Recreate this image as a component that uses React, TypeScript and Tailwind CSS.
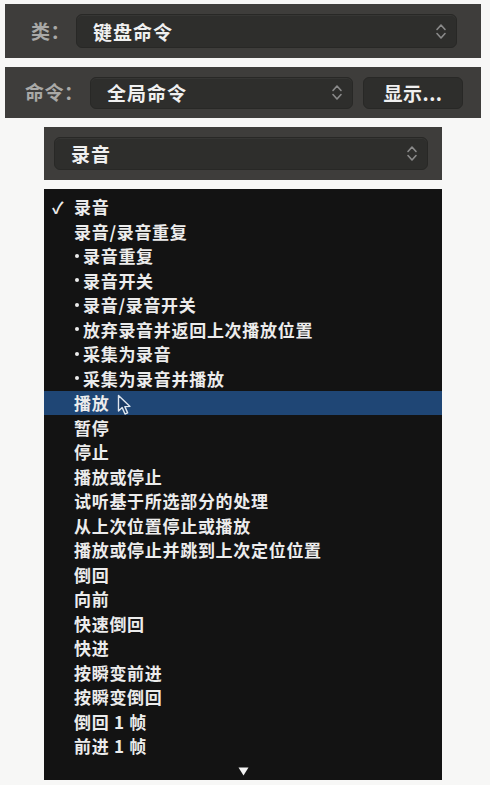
const CJK = "font-['Noto_Sans_CJK_SC','Liberation_Sans',sans-serif]";

/* ── Data ─────────────────────────────────────────────────── */

type Item = { label: string; bullet?: boolean; checked?: boolean; active?: boolean };

const ITEMS: Item[] = [
    { label: "录音", checked: true },
    { label: "录音/录音重复" },
    { label: "录音重复", bullet: true },
    { label: "录音开关", bullet: true },
    { label: "录音/录音开关", bullet: true },
    { label: "放弃录音并返回上次播放位置", bullet: true },
    { label: "采集为录音", bullet: true },
    { label: "采集为录音并播放", bullet: true },
    { label: "播放", active: true },
    { label: "暂停" },
    { label: "停止" },
    { label: "播放或停止" },
    { label: "试听基于所选部分的处理" },
    { label: "从上次位置停止或播放" },
    { label: "播放或停止并跳到上次定位位置" },
    { label: "倒回" },
    { label: "向前" },
    { label: "快速倒回" },
    { label: "快进" },
    { label: "按瞬变前进" },
    { label: "按瞬变倒回" },
    { label: "倒回 1 帧" },
    { label: "前进 1 帧" },
];

/* ── Bits ─────────────────────────────────────────────────── */

function Chevrons() {
    return (
        <svg width="12" height="17" viewBox="0 0 12 17" fill="none" stroke="#8a8a8a" strokeWidth="1.6" strokeLinecap="round" strokeLinejoin="round">
            <path d="M2 6.5 L6 2 L10 6.5" />
            <path d="M2 10.5 L6 15 L10 10.5" />
        </svg>
    );
}

function Select({ text, className }: { text: string; className: string }) {
    return (
        <div className={`flex items-center justify-between rounded-[6px] bg-[#2e2e2c] border border-[#282826] shadow-[inset_0_1px_0_rgba(255,255,255,0.04)] ${className}`}>
            <span className="text-[19px] font-bold tracking-[1px] text-[#f0f0f0] leading-none">{text}</span>
            <Chevrons />
        </div>
    );
}

function Cursor() {
    return (
        <svg className="absolute left-[73px] top-[3px]" width="16" height="22" viewBox="0 0 16 22">
            <path d="M1.5 1.5 L1.5 17 L5.2 13.6 L8 20 L10.6 18.9 L7.9 12.6 L13 12.4 Z" fill="#1a3a63" stroke="#dfe6ee" strokeWidth="1.4" strokeLinejoin="round" />
        </svg>
    );
}

/* ── Page ─────────────────────────────────────────────────── */

export default function App() {
    return (
        <div className={`${CJK} w-[490px] h-[785px] bg-[#f7f7f6] pt-[4px] flex flex-col`}>
            {/* ── Category ─────────────────────────────── */}
            <div className="ml-[5px] w-[476px] h-[54px] bg-[#3e3d3b] flex items-center">
                <span className="ml-[26px] w-[45px] text-[19px] font-bold text-[#a9a9a7] tracking-[0.5px]">类：</span>
                <Select text="键盘命令" className="w-[381px] h-[34px] pl-[16px] pr-[9px]" />
            </div>

            {/* ── Command ──────────────────────────────── */}
            <div className="ml-[5px] mt-[9px] w-[476px] h-[51px] bg-[#3e3d3b] flex items-center">
                <span className="ml-[20px] w-[65px] text-[19px] font-bold text-[#a9a9a7] tracking-[0.5px]">命令：</span>
                <Select text="全局命令" className="w-[263px] h-[32px] pl-[16px] pr-[9px]" />
                <div className="ml-[10px] w-[100px] h-[32px] rounded-[6px] bg-[#2e2e2c] border border-[#282826] flex items-center justify-center">
                    <span className="text-[19px] font-bold tracking-[0.5px] text-[#f0f0f0] leading-none">显示...</span>
                </div>
            </div>

            {/* ── Selected command ─────────────────────── */}
            <div className="ml-[44px] mt-[9px] w-[398px] h-[53px] bg-[#3e3d3b] flex items-center">
                <Select text="录音" className="ml-[10px] w-[374px] h-[33px] pl-[16px] pr-[9px]" />
            </div>

            {/* ── Menu ─────────────────────────────────── */}
            <div className="ml-[44px] mt-[9px] w-[398px] h-[591px] bg-[#131313] pt-[5.5px] flex flex-col">
                {ITEMS.map((it) => (
                    <div
                        key={it.label}
                        className={`relative h-[24.5px] flex items-center text-[17px] font-bold tracking-[0.7px] text-[#ececec] leading-none ${
                            it.active ? "bg-[#1f4675]" : ""
                        }`}
                    >
                        <span className="w-[30px] pl-[8px] text-[16px]">{it.checked ? "✓" : ""}</span>
                        {it.bullet && <span className="ml-[1px] mr-[4px] w-[4px] h-[4px] rounded-full bg-[#ececec]" />}
                        <span>{it.label}</span>
                        {it.active && <Cursor />}
                    </div>
                ))}
                <div className="flex-1 flex items-center justify-center pt-[4px]">
                    <svg width="11" height="9" viewBox="0 0 11 9">
                        <path d="M0.5 0.5 L10.5 0.5 L5.5 8.5 Z" fill="#f2f2f2" />
                    </svg>
                </div>
            </div>
        </div>
    );
}
